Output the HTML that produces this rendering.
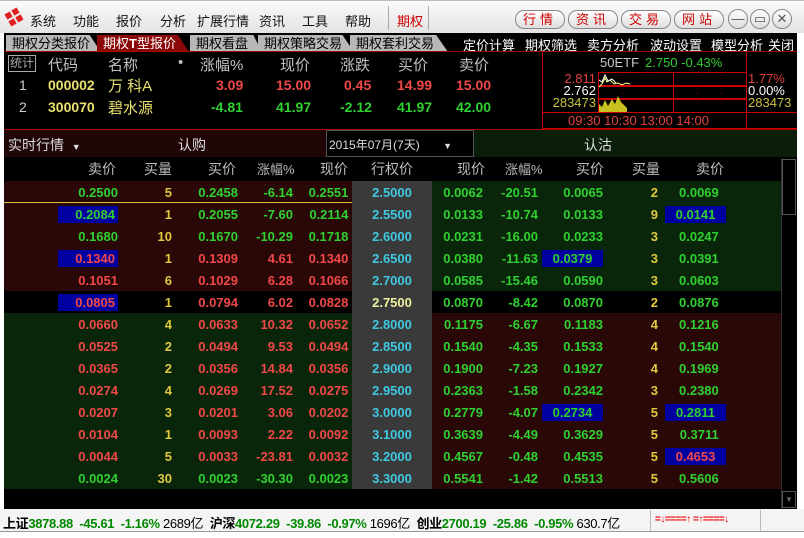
<!DOCTYPE html>
<html><head><meta charset="utf-8"><style>
*{margin:0;padding:0;box-sizing:border-box}
body{width:804px;height:538px;background:#fff;position:relative;overflow:hidden;font-family:"Liberation Sans","Noto Sans CJK SC",sans-serif}
.a{position:absolute;white-space:nowrap}
#top{left:0;top:0;width:804px;height:33px;background:linear-gradient(#fafafa,#e4e4e4);border-top:1px solid #bbb}
.m{font-size:13px;color:#111;top:11px}
.btn{top:10px;height:19px;border:1px solid #888;border-radius:9px;background:linear-gradient(#fff,#ddd);color:#c00;font-size:13px;text-align:center;line-height:17px;letter-spacing:4px}
.cb{top:9px;width:20px;height:20px;border:1px solid #888;border-radius:50%;background:linear-gradient(#fff,#ddd);color:#555;font-size:13px;text-align:center;line-height:18px}
#main{left:4px;top:33px;width:793px;height:476px;background:#000}
.tab{top:35px;height:17px;background:#b8b8b8;color:#000;font-size:13px;line-height:17px;padding-left:6px;clip-path:polygon(0 100%,0 0,88% 0,100% 100%)}
.tl{top:35px;font-size:13px;color:#fff}
.h{font-size:15px;color:#c0c0c0}
.v{font-size:14px;font-weight:bold}
.r{color:#f04848}.g{color:#30d030}.y{color:#e8e070}.w{color:#fff}.c{color:#40c8e0}.q{color:#e0c840}
table{border-collapse:collapse;table-layout:fixed;position:absolute;left:4px;top:181px;width:777px}
td{height:22px;font-size:13px;font-weight:bold;text-align:right;padding:0;white-space:nowrap}
td.s{background:#3a3a3a;text-align:center;color:#40c8e0}
.b{display:inline-block;background:#0000a0;padding:1px 3px;width:60px;text-align:right}
.bb{display:inline-block;background:#0000a0;padding:1px 0;width:61px;text-align:center}
.M td.L,.G td.R{background:#2a0808}
.G td.L,.M td.R{background:#0a260a}
.K td{background:#000}
.K td.s{background:#3a3a3a;color:#f0f0a0}
.st{top:513px;font-size:13px;letter-spacing:-0.35px}
</style></head><body>
<div class="a" id="top"></div>
<svg class="a" style="left:4px;top:7px" width="20" height="20" viewBox="0 0 20 20"><g fill="#e02020" transform="rotate(-30 10 10)"><rect x="3" y="3" width="6" height="6"/><rect x="11" y="3" width="6" height="6"/><rect x="3" y="11" width="6" height="6"/><rect x="11" y="11" width="6" height="6"/></g></svg>
<div class="a m" style="left:30px">系统</div><div class="a m" style="left:73px">功能</div><div class="a m" style="left:116px">报价</div><div class="a m" style="left:160px">分析</div><div class="a m" style="left:197px">扩展行情</div><div class="a m" style="left:259px">资讯</div><div class="a m" style="left:302px">工具</div><div class="a m" style="left:345px">帮助</div>
<div class="a" style="left:388px;top:6px;width:1px;height:24px;background:#aaa"></div>
<div class="a m" style="left:397px;color:#c00">期权</div>
<div class="a" style="left:428px;top:6px;width:1px;height:24px;background:#aaa"></div>
<div class="a btn" style="left:515px;width:50px">行情</div><div class="a btn" style="left:568px;width:50px">资讯</div><div class="a btn" style="left:621px;width:50px">交易</div><div class="a btn" style="left:674px;width:50px">网站</div>
<div class="a cb" style="left:728px">—</div><div class="a cb" style="left:750px">▭</div><div class="a cb" style="left:772px">✕</div>
<div class="a" id="main"></div>
<div class="a tab" style="left:6px;width:95px">期权分类报价</div>
<div class="a tab" style="left:97px;width:92px;background:#8c0808;color:#fff">期权<b>T</b>型报价</div>
<div class="a tab" style="left:190px;width:72px">期权看盘</div>
<div class="a tab" style="left:258px;width:96px">期权策略交易</div>
<div class="a tab" style="left:350px;width:98px">期权套利交易</div>
<div class="a tl" style="left:463px">定价计算</div><div class="a tl" style="left:525px">期权筛选</div><div class="a tl" style="left:587px">卖方分析</div><div class="a tl" style="left:650px">波动设置</div><div class="a tl" style="left:711px">模型分析</div><div class="a tl" style="left:768px">关闭</div>
<div class="a" style="left:4px;top:51px;width:793px;height:1px;background:#a00"></div>
<div class="a" style="left:8px;top:55px;width:28px;height:17px;border:1px solid #aaa;color:#aaa;font-size:12px;line-height:15px;text-align:center">统计</div>
<div class="a h" style="left:48px;top:54px">代码</div><div class="a h" style="left:108px;top:54px">名称</div><div class="a h" style="left:178px;top:54px">•</div><div class="a h" style="left:200px;top:54px">涨幅%</div><div class="a h" style="left:280px;top:54px">现价</div><div class="a h" style="left:340px;top:54px">涨跌</div><div class="a h" style="left:398px;top:54px">买价</div><div class="a h" style="left:459px;top:54px">卖价</div>
<div class="a v" style="left:19px;top:77px;color:#ccc;font-weight:normal">1</div><div class="a v y" style="left:48px;top:77px">000002</div><div class="a h y" style="left:108px;top:75px">万 科A</div><div class="a v r" style="left:216px;top:77px">3.09</div><div class="a v r" style="left:276px;top:77px">15.00</div><div class="a v r" style="left:344px;top:77px">0.45</div><div class="a v r" style="left:397px;top:77px">14.99</div><div class="a v r" style="left:456px;top:77px">15.00</div>
<div class="a v" style="left:19px;top:99px;color:#ccc;font-weight:normal">2</div><div class="a v y" style="left:48px;top:99px">300070</div><div class="a h y" style="left:108px;top:97px">碧水源</div><div class="a v g" style="left:211px;top:99px">-4.81</div><div class="a v g" style="left:276px;top:99px">41.97</div><div class="a v g" style="left:340px;top:99px">-2.12</div><div class="a v g" style="left:397px;top:99px">41.97</div><div class="a v g" style="left:456px;top:99px">42.00</div>
<svg class="a" style="left:542px;top:52px" width="255" height="77">
<g stroke="#c00" fill="none"><line x1="0.5" y1="0" x2="0.5" y2="77"/><rect x="56.5" y="20.5" width="148" height="40"/><line x1="56" y1="34" x2="204" y2="34" stroke-width="2"/><line x1="56" y1="47" x2="204" y2="47" stroke-width="2"/><line x1="131.5" y1="20" x2="131.5" y2="60"/><line x1="0" y1="60.5" x2="255" y2="60.5"/><line x1="204.5" y1="0" x2="204.5" y2="77"/><line x1="0" y1="76.5" x2="255" y2="76.5"/></g>
<g stroke="#600" stroke-dasharray="1 4"><line x1="80" y1="21" x2="80" y2="60"/><line x1="106" y1="21" x2="106" y2="60"/><line x1="156" y1="21" x2="156" y2="60"/><line x1="180" y1="21" x2="180" y2="60"/></g>
<polyline points="57,35 60,32 63,26 65,30 68,28 72,32 76,31 80,33 84,31 88,32" stroke="#ffff80" fill="none"/>
<polyline points="57,28 60,30 63,23 66,29 70,27 74,31" stroke="#fff" fill="none"/>
<path d="M57 60 V52 L60 55 L63 48 L66 54 L70 47 L73 52 L76 44 L79 50 L82 53 L85 56 V60 Z" fill="#c8c020"/>
<text x="58" y="15" font-size="13" fill="#ccc" font-family="Liberation Sans">50ETF</text><text x="103" y="15" font-size="13" fill="#30d030" font-family="Liberation Sans">2.750 -0.43%</text>
<text x="54" y="31" font-size="13" fill="#e04040" text-anchor="end" font-family="Liberation Sans">2.811</text><text x="54" y="43" font-size="13" fill="#fff" text-anchor="end" font-family="Liberation Sans">2.762</text><text x="54" y="55" font-size="13" fill="#c8c040" text-anchor="end" font-family="Liberation Sans">283473</text>
<text x="206" y="31" font-size="13" fill="#e04040" font-family="Liberation Sans">1.77%</text><text x="206" y="43" font-size="13" fill="#fff" font-family="Liberation Sans">0.00%</text><text x="206" y="55" font-size="13" fill="#c8c040" font-family="Liberation Sans">283473</text>
<text x="26" y="73" font-size="13" fill="#e04040" font-family="Liberation Sans">09:30 10:30 13:00 14:00</text>
</svg>
<div class="a" style="left:4px;top:129px;width:793px;height:1px;background:#a00"></div>
<div class="a" style="left:4px;top:130px;width:322px;height:27px;background:#200606"></div>
<div class="a" style="left:326px;top:130px;width:148px;height:27px;background:#000;border:1px solid #555"></div>
<div class="a" style="left:474px;top:130px;width:323px;height:27px;background:#0a1e0a"></div>
<div class="a" style="left:8px;top:135px;font-size:14px;color:#ddd">实时行情 &nbsp;<span style="font-size:9px">▼</span></div>
<div class="a" style="left:178px;top:135px;font-size:14px;color:#ddd">认购</div>
<div class="a" style="left:329px;top:136px;font-size:12px;color:#ddd">2015年07月(7天) &nbsp;&nbsp;&nbsp;&nbsp;&nbsp;&nbsp;<span style="font-size:9px">▼</span></div>
<div class="a" style="left:584px;top:135px;font-size:14px;color:#ddd">认沽</div>
<div class="a" style="left:0;top:159px;font-size:14px;color:#bbb">
<span class="a" style="left:88px">卖价</span><span class="a" style="left:144px">买量</span><span class="a" style="left:208px">买价</span><span class="a" style="left:257px;font-size:13px">涨幅%</span><span class="a" style="left:320px">现价</span><span class="a" style="left:371px">行权价</span><span class="a" style="left:457px">现价</span><span class="a" style="left:505px;font-size:13px">涨幅%</span><span class="a" style="left:576px">买价</span><span class="a" style="left:632px">买量</span><span class="a" style="left:696px">卖价</span></div>
<table>
<colgroup><col style="width:114px"><col style="width:54px"><col style="width:66px"><col style="width:55px"><col style="width:59px"><col style="width:80px"><col style="width:51px"><col style="width:55px"><col style="width:65px"><col style="width:55px"><col style="width:68px"><col style="width:55px"></colgroup>
<tr class="M"><td class="L g">0.2500</td><td class="L q">5</td><td class="L g">0.2458</td><td class="L g">-6.14</td><td class="L g">0.2551&nbsp;</td><td class="s">2.5000</td><td class="R g">0.0062</td><td class="R g">-20.51</td><td class="R g">0.0065</td><td class="R q">2</td><td class="R g">0.0069&nbsp;&nbsp;</td><td class="R"></td></tr>
<tr class="M"><td class="L g"><span class="b">0.2084</span></td><td class="L q">1</td><td class="L g">0.2055</td><td class="L g">-7.60</td><td class="L g">0.2114&nbsp;</td><td class="s">2.5500</td><td class="R g">0.0133</td><td class="R g">-10.74</td><td class="R g">0.0133</td><td class="R q">9</td><td class="R g"><span class="bb">0.0141</span></td><td class="R"></td></tr>
<tr class="M"><td class="L g">0.1680</td><td class="L q">10</td><td class="L g">0.1670</td><td class="L g">-10.29</td><td class="L g">0.1718&nbsp;</td><td class="s">2.6000</td><td class="R g">0.0231</td><td class="R g">-16.00</td><td class="R g">0.0233</td><td class="R q">3</td><td class="R g">0.0247&nbsp;&nbsp;</td><td class="R"></td></tr>
<tr class="M"><td class="L r"><span class="b">0.1340</span></td><td class="L q">1</td><td class="L r">0.1309</td><td class="L r">4.61</td><td class="L r">0.1340&nbsp;</td><td class="s">2.6500</td><td class="R g">0.0380</td><td class="R g">-11.63</td><td class="R g"><span class="bb">0.0379</span></td><td class="R q">3</td><td class="R g">0.0391&nbsp;&nbsp;</td><td class="R"></td></tr>
<tr class="M"><td class="L r">0.1051</td><td class="L q">6</td><td class="L r">0.1029</td><td class="L r">6.28</td><td class="L r">0.1066&nbsp;</td><td class="s">2.7000</td><td class="R g">0.0585</td><td class="R g">-15.46</td><td class="R g">0.0590</td><td class="R q">3</td><td class="R g">0.0603&nbsp;&nbsp;</td><td class="R"></td></tr>
<tr class="K"><td class="r"><span class="b">0.0805</span></td><td class="q">1</td><td class="r">0.0794</td><td class="r">6.02</td><td class="r">0.0828&nbsp;</td><td class="s">2.7500</td><td class="g">0.0870</td><td class="g">-8.42</td><td class="g">0.0870</td><td class="q">2</td><td class="g">0.0876&nbsp;&nbsp;</td><td></td></tr>
<tr class="G"><td class="L r">0.0660</td><td class="L q">4</td><td class="L r">0.0633</td><td class="L r">10.32</td><td class="L r">0.0652&nbsp;</td><td class="s">2.8000</td><td class="R g">0.1175</td><td class="R g">-6.67</td><td class="R g">0.1183</td><td class="R q">4</td><td class="R g">0.1216&nbsp;&nbsp;</td><td class="R"></td></tr>
<tr class="G"><td class="L r">0.0525</td><td class="L q">2</td><td class="L r">0.0494</td><td class="L r">9.53</td><td class="L r">0.0494&nbsp;</td><td class="s">2.8500</td><td class="R g">0.1540</td><td class="R g">-4.35</td><td class="R g">0.1533</td><td class="R q">4</td><td class="R g">0.1540&nbsp;&nbsp;</td><td class="R"></td></tr>
<tr class="G"><td class="L r">0.0365</td><td class="L q">2</td><td class="L r">0.0356</td><td class="L r">14.84</td><td class="L r">0.0356&nbsp;</td><td class="s">2.9000</td><td class="R g">0.1900</td><td class="R g">-7.23</td><td class="R g">0.1927</td><td class="R q">4</td><td class="R g">0.1969&nbsp;&nbsp;</td><td class="R"></td></tr>
<tr class="G"><td class="L r">0.0274</td><td class="L q">4</td><td class="L r">0.0269</td><td class="L r">17.52</td><td class="L r">0.0275&nbsp;</td><td class="s">2.9500</td><td class="R g">0.2363</td><td class="R g">-1.58</td><td class="R g">0.2342</td><td class="R q">3</td><td class="R g">0.2380&nbsp;&nbsp;</td><td class="R"></td></tr>
<tr class="G"><td class="L r">0.0207</td><td class="L q">3</td><td class="L r">0.0201</td><td class="L r">3.06</td><td class="L r">0.0202&nbsp;</td><td class="s">3.0000</td><td class="R g">0.2779</td><td class="R g">-4.07</td><td class="R g"><span class="bb">0.2734</span></td><td class="R q">5</td><td class="R g"><span class="bb">0.2811</span></td><td class="R"></td></tr>
<tr class="G"><td class="L r">0.0104</td><td class="L q">1</td><td class="L r">0.0093</td><td class="L r">2.22</td><td class="L r">0.0092&nbsp;</td><td class="s">3.1000</td><td class="R g">0.3639</td><td class="R g">-4.49</td><td class="R g">0.3629</td><td class="R q">5</td><td class="R g">0.3711&nbsp;&nbsp;</td><td class="R"></td></tr>
<tr class="G"><td class="L r">0.0044</td><td class="L q">5</td><td class="L r">0.0033</td><td class="L r">-23.81</td><td class="L r">0.0032&nbsp;</td><td class="s">3.2000</td><td class="R g">0.4567</td><td class="R g">-0.48</td><td class="R g">0.4535</td><td class="R q">5</td><td class="R r"><span class="bb">0.4653</span></td><td class="R"></td></tr>
<tr class="G"><td class="L g">0.0024</td><td class="L q">30</td><td class="L g">0.0023</td><td class="L g">-30.30</td><td class="L g">0.0023&nbsp;</td><td class="s">3.3000</td><td class="R g">0.5541</td><td class="R g">-1.42</td><td class="R g">0.5513</td><td class="R q">5</td><td class="R g">0.5606&nbsp;&nbsp;</td><td class="R"></td></tr>
</table>
<div class="a" style="left:4px;top:202px;width:348px;height:1px;background:#e0c040"></div>
<div class="a" style="left:781px;top:158px;width:16px;height:351px;background:#000;border-left:1px solid #333"></div>
<div class="a" style="left:782px;top:159px;width:14px;height:56px;border:1px solid #555"></div>
<div class="a" style="left:782px;top:491px;width:14px;height:17px;border:1px solid #555;color:#666;font-size:8px;text-align:center;line-height:15px">▼</div>
<div class="a" style="left:0;top:509px;width:804px;height:23px;background:#f4f4f4;border-bottom:1px solid #999"></div>
<div class="a st" style="left:3px;color:#000;font-weight:bold">上证<span style="color:#080">3878.88 &nbsp;-45.61 &nbsp;-1.16%</span> <span style="font-weight:normal">2689亿</span> &nbsp;沪深<span style="color:#080">4072.29 &nbsp;-39.86 &nbsp;-0.97%</span> <span style="font-weight:normal">1696亿</span> &nbsp;创业<span style="color:#080">2700.19 &nbsp;-25.86 &nbsp;-0.95%</span> <span style="font-weight:normal">630.7亿</span></div>
<div class="a" style="left:650px;top:510px;width:1px;height:21px;background:#bbb"></div>
<div class="a" style="left:655px;top:514px;font-size:10px;color:#e00;font-weight:bold;letter-spacing:-0.5px">=↓====↑ =↑====↓</div>
<div class="a" style="left:760px;top:510px;width:1px;height:21px;background:#bbb"></div>
</body></html>
